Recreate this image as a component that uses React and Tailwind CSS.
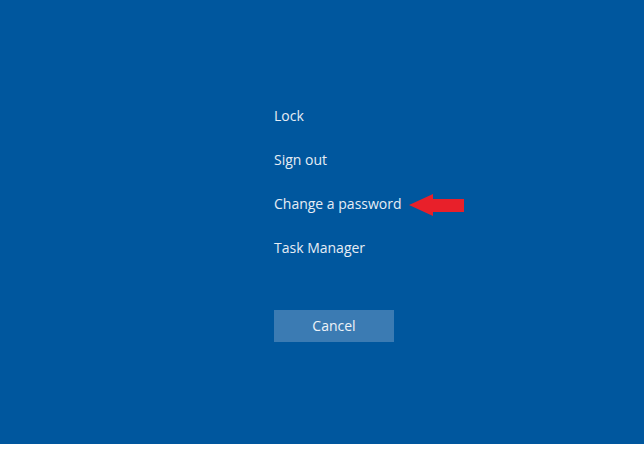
export default function App() {
  return (
    <div className="w-[644px] h-[450px] bg-white" style={{ fontFamily: '"Open Sans", "Noto Sans", sans-serif' }}>
      <div className="h-[444px] bg-[#00579e] pl-[274px] pt-[106px] flex flex-col items-start">
        <div className="flex flex-col gap-[24px] text-[14px] leading-[20px] text-[#e6edf5]">
          <div>Lock</div>
          <div>Sign out</div>
          <div className="flex items-center h-[20px]">
            <span>Change a password</span>
            <svg width="58" height="24" viewBox="0 0 58 24" className="ml-[6px] shrink-0">
              <polygon points="1,13 25,2 25,7 56,7 56,20 25,20 25,24" fill="#e8202a" />
            </svg>
          </div>
          <div>Task Manager</div>
        </div>
        <button className="mt-[52px] w-[120px] h-[32px] bg-[#3b7bb3] text-[#eef3f8] text-[14px] leading-[20px]">
          Cancel
        </button>
      </div>
    </div>
  );
}
